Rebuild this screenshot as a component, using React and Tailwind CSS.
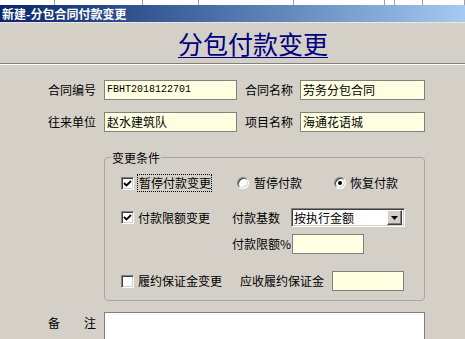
import React from 'react';

function Check({ checked }) {
    return (
        <div className="w-[13px] h-[13px] bg-white border border-t-[#808080] border-l-[#808080] border-b-white border-r-white shadow-[inset_1px_1px_0_#404040,inset_-1px_-1px_0_#d4d0c8] flex items-center justify-center shrink-0">
            {checked && (
                <svg width="9" height="9" viewBox="0 0 9 9">
                    <path d="M1 4 L3.5 6.5 L8 2" fill="none" stroke="#000" strokeWidth="1.8" />
                </svg>
            )}
        </div>
    );
}

function Radio({ checked }) {
    return (
        <div className="w-[12px] h-[12px] rounded-full bg-white border border-t-[#808080] border-l-[#808080] border-b-white border-r-white shadow-[inset_1px_1px_0_#404040,inset_-1px_-1px_0_#d4d0c8] flex items-center justify-center shrink-0">
            {checked && <div className="w-[4px] h-[4px] rounded-full bg-black" />}
        </div>
    );
}

function Field({ w, value, mono }) {
    return (
        <div className={`${w} h-full bg-[#ffffe1] border border-[#808080] flex items-center pl-[2px] text-black ${mono ? "font-['Liberation_Mono',monospace] text-[10px]" : 'text-[12px]'}`}>
            {value}
        </div>
    );
}

export default function App() {
    const gridLines = [55, 88, 56, 95, 91, 10, 28, 42];

    return (
        <div className="w-[465px] h-[339px] overflow-hidden bg-[#d4d0c8] font-['Noto_Sans_CJK_SC',sans-serif] text-[12px] text-black leading-none">
            {/* tail of the grid behind the window */}
            <div className="h-[5px] bg-white flex">
                {gridLines.map((w, i) => (
                    <div key={i} style={{ width: w }} className="h-full border-r border-[#a0a0a0]" />
                ))}
            </div>

            {/* caption */}
            <div className="h-[17px] bg-gradient-to-r from-[#0a246a] to-[#a6caf0] flex items-center pl-[2px] text-white font-bold text-[12px]">
                新建-分包合同付款变更
            </div>
            <div className="h-[1px] bg-[#ece9e4]" />

            {/* heading */}
            <div className="h-[40px] pl-[178px] pt-[7px]">
                <span className="text-[25px] leading-[26px] text-[#000080] underline underline-offset-[3px] decoration-1">分包付款变更</span>
            </div>
            <div className="h-[1px] bg-[#808080]" />
            <div className="h-[1px] bg-white" />

            {/* contract fields */}
            <div className="mt-[15px] flex flex-col gap-[12px] pl-[48px]">
                <div className="h-[20px] flex items-center">
                    <span className="w-[56px]">合同编号</span>
                    <Field w="w-[133px]" value="FBHT2018122701" mono />
                    <span className="w-[55px] ml-[8px]">合同名称</span>
                    <Field w="w-[125px]" value="劳务分包合同" />
                </div>
                <div className="h-[20px] flex items-center">
                    <span className="w-[56px]">往来单位</span>
                    <Field w="w-[133px]" value="赵水建筑队" />
                    <span className="w-[55px] ml-[8px]">项目名称</span>
                    <Field w="w-[125px]" value="海通花语城" />
                </div>
            </div>

            {/* change conditions */}
            <fieldset className="mt-[18px] ml-[104px] w-[321px] border border-[#a5a5a5] rounded-[4px] pb-[9px]">
                <legend className="ml-[6px] px-[1px] leading-[15px]">变更条件</legend>

                <div className="mt-[9px] h-[18px] flex items-center pl-[16px]">
                    <Check checked />
                    <span className="ml-[3px] w-[75px] h-[18px] border border-dotted border-black flex items-center pl-[1px]">暂停付款变更</span>
                    <div className="ml-[25px]"><Radio /></div>
                    <span className="ml-[5px] w-[60px]">暂停付款</span>
                    <div className="ml-[20px]"><Radio checked /></div>
                    <span className="ml-[4px]">恢复付款</span>
                </div>

                <div className="mt-[16px] h-[19px] flex items-center pl-[16px]">
                    <Check checked />
                    <span className="ml-[4px] w-[94px]">付款限额变更</span>
                    <span className="w-[59px]">付款基数</span>
                    <div className="w-[114px] h-[19px] bg-white border border-t-[#808080] border-l-[#808080] border-b-white border-r-white shadow-[inset_1px_1px_0_#404040,inset_-1px_-1px_0_#d4d0c8] flex items-center pl-[2px] pr-[2px]">
                        <span className="flex-1">按执行金额</span>
                        <div className="w-[15px] h-[15px] bg-[#d4d0c8] border border-t-white border-l-white border-b-[#404040] border-r-[#404040] shadow-[inset_-1px_-1px_0_#808080] flex items-center justify-center">
                            <svg width="7" height="4" viewBox="0 0 7 4">
                                <path d="M0 0 H7 L3.5 4 Z" fill="#000" />
                            </svg>
                        </div>
                    </div>
                </div>

                <div className="mt-[7px] h-[20px] flex items-center pl-[127px]">
                    <span className="w-[60px]">付款限额%</span>
                    <Field w="w-[72px]" />
                </div>

                <div className="mt-[17px] h-[20px] flex items-center pl-[16px]">
                    <Check />
                    <span className="ml-[4px] w-[102px]">履约保证金变更</span>
                    <span className="w-[92px]">应收履约保证金</span>
                    <Field w="w-[72px]" />
                </div>
            </fieldset>

            {/* remarks */}
            <div className="mt-[11px] flex pl-[48px]">
                <div className="w-[56px] pt-[5px] flex">
                    <span className="w-[36px]">备</span>
                    <span>注</span>
                </div>
                <div className="w-[321px] h-[60px] bg-white border border-[#808080]" />
            </div>
        </div>
    );
}
